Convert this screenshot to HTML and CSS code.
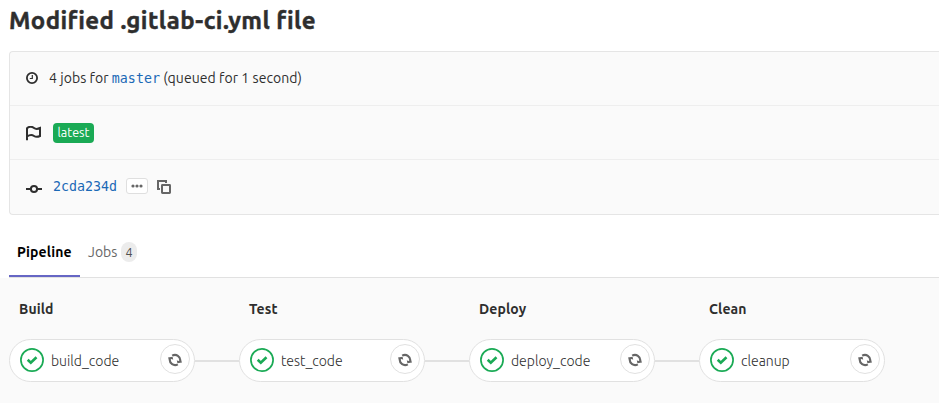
FILE: index.html
```html
<!DOCTYPE html>
<html lang="en">
<head>
<meta charset="utf-8">
<title>Pipeline</title>
<link rel="stylesheet" href="styles.css">
</head>
<body>
<svg class="sprite" aria-hidden="true">
  <symbol id="check" viewBox="0 0 24 24"><circle cx="12" cy="12" r="11.1" fill="#fff" stroke="#1aaa55" stroke-width="1.7"/><path d="M7.700 11.800l3.100 3 5.700-5.500" fill="none" stroke="#1aaa55" stroke-width="2.600"/></symbol>
  <symbol id="retry" viewBox="0 0 14 14"><path d="M4.200 2.700A5.200 5.200 0 0 1 12.100 8M9.800 11.300A5.200 5.200 0 0 1 1.900 6" fill="none" stroke="#666" stroke-width="2.100"/><path d="M0 4.500l4.600-.8.6 3-1.500-.6L1 7zM14 9.500l-4.600.8-.6-3 1.500.6L13 7z" fill="#666"/></symbol>
</svg>
<h1 class="title">Modified .gitlab-ci.yml file</h1>
<section class="info">
  <div class="row">
    <svg class="clock" viewBox="0 0 12 12"><circle cx="6" cy="6" r="5.1"/><path d="M6.3 3v3.5H3.8"/></svg>
    <p class="summary">4 jobs for <a class="branch">master</a> (queued for 1 second)</p>
  </div>
  <div class="row">
    <svg class="flag" viewBox="0 0 15 15"><path d="M1 14.2V2.2C4-.2 6.700 1 8 2s3.500 1.200 6 0v8c-2.500 1.200-4.700.9-6 0S4 8.600 1 10.500"/></svg>
    <span class="badge">latest</span>
  </div>
  <div class="row">
    <svg class="commit" viewBox="0 0 16 10"><path d="M0 5h4.500M11.500 5H16"/><circle cx="8" cy="5" r="3.100"/></svg>
    <a class="sha">2cda234d</a>
    <span class="more"><svg viewBox="0 0 12 4"><circle cx="2" cy="2" r="1.600"/><circle cx="6" cy="2" r="1.600"/><circle cx="10" cy="2" r="1.600"/></svg></span>
    <svg class="copy" viewBox="0 0 14 14"><path d="M3 9H1V1h8v2"/><rect x="5" y="5" width="8" height="8" rx=".4"/></svg>
  </div>
</section>
<nav class="tabs">
  <a class="tab active">Pipeline</a>
  <a class="tab"><span class="jobs">Jobs</span><span class="num">4</span></a>
</nav>
<main class="graph">
  <section class="stage"><h2>Build</h2><div class="job"><svg class="status"><use href="#check"/></svg><span class="name">build_code</span><span class="retry"><svg><use href="#retry"/></svg></span></div></section>
  <section class="stage"><h2>Test</h2><div class="job"><svg class="status"><use href="#check"/></svg><span class="name">test_code</span><span class="retry"><svg><use href="#retry"/></svg></span></div></section>
  <section class="stage"><h2>Deploy</h2><div class="job"><svg class="status"><use href="#check"/></svg><span class="name">deploy_code</span><span class="retry"><svg><use href="#retry"/></svg></span></div></section>
  <section class="stage"><h2>Clean</h2><div class="job"><svg class="status"><use href="#check"/></svg><span class="name">cleanup</span><span class="retry"><svg><use href="#retry"/></svg></span></div></section>
</main>
</body>
</html>
```
FILE: styles.css
```css
* { box-sizing: border-box; }
body { margin: 0; height: 403px; overflow: hidden; background: #fff; color: #2e2e2e; font: 14px/20px Ubuntu, "Noto Sans", sans-serif; white-space: nowrap; }
svg { display: block; flex: none; }
.sprite { position: absolute; width: 0; height: 0; }
.title { margin: 0 0 0 9px; height: 51px; padding-top: 5px; font-size: 24px; line-height: 32px; letter-spacing: .42px; -webkit-text-stroke: .45px #2e2e2e; }
.info { margin-left: 9px; height: 164px; border: 1px solid #e5e5e5; border-right: 0; border-radius: 4px 0 0 4px; background: #fafafa; }
.row { height: 54px; display: flex; align-items: center; padding-left: 16px; border-bottom: 1px solid #eee; }
.row:last-child { border: 0; }
.row svg { fill: none; stroke: #2e2e2e; stroke-width: 1.8; }
.row .clock { width: 12px; height: 12px; margin-top: -1px; }
.clock path { stroke-width: 1.2; }
.summary { margin: -1px 0 0 11px; height: 20px; letter-spacing: .06px; }
.branch, .sha { color: #1b69b6; font-family: "DejaVu Sans Mono", monospace; font-size: 13.3px; letter-spacing: 0; }
.row .flag { width: 15px; height: 15px; margin-top: 2px; stroke-width: 2; }
.badge { margin-left: 12px; width: 41px; height: 20px; border-radius: 4px; background: #1aaa55; color: #fff; font-size: 12.5px; line-height: 19px; text-align: center; }
.row .commit { width: 16px; height: 10px; margin-top: 4px; stroke-width: 2; }
.sha { margin: -1px 0 0 11px; width: 73px; }
.more { width: 22px; height: 16px; display: flex; align-items: center; justify-content: center; border: 1px solid #dfdfdf; border-radius: 3px; background: #fff; margin-top: -3px; }
.more svg { width: 12px; height: 4px; fill: #666; stroke: none; }
.row .copy { width: 14px; height: 14px; margin: 0 0 0 9px; stroke: #666; stroke-width: 2; }
.tabs { height: 63px; margin-left: 9px; display: flex; align-items: flex-end; border-bottom: 1px solid #e1e1e1; }
.tab { height: 48px; padding: 13px 8px 0; display: flex; color: #666; }
.active { width: 71px; border-bottom: 2px solid #6666c4; color: #000; font-weight: 700; letter-spacing: .15px; }
.jobs { width: 33px; }
.num { width: 16px; height: 20px; border-radius: 10px; background: #ececec; color: #505050; font-size: 12.5px; text-align: center; }
.graph { height: 125px; padding: 21px 0 0 9px; display: flex; gap: 44px; background: #fafafa; }
.stage { width: 186px; flex: none; }
h2 { margin: 0 0 20px 10px; font-size: 14px; line-height: 20px; letter-spacing: .1px; }
.job { position: relative; width: 186px; height: 43px; display: flex; align-items: center; padding: 0 4px 0 10px; border: 1px solid #e1e1e1; border-radius: 22px; background: #fff; }
.stage:not(:last-child) .job::after { content: ""; position: absolute; left: 185px; top: 20px; width: 44px; height: 2px; background: #e1e1e1; }
.status { width: 24px; height: 24px; margin-top: -1px; }
.name { margin-left: 7px; font-weight: 300; }
.retry { width: 30px; height: 30px; margin: -3px 0 0 auto; border: 1px solid #e1e1e1; border-radius: 50%; display: flex; align-items: center; justify-content: center; }
.retry svg { width: 14px; height: 14px; margin-top: 2px; }
```
